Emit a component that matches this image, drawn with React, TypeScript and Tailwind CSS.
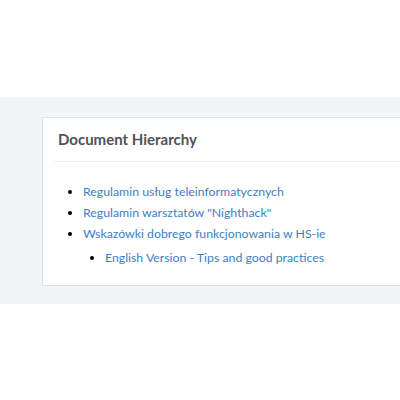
const items = [
  { title: "Regulamin usług teleinformatycznych", children: [] as string[] },
  { title: 'Regulamin warsztatów "Nighthack"', children: [] as string[] },
  {
    title: "Wskazówki dobrego funkcjonowania w HS-ie",
    children: ["English Version - Tips and good practices"],
  },
];

const App = () => {
  return (
    <div className="w-[400px] h-[400px] bg-white font-['Lato','Liberation_Sans',sans-serif] overflow-hidden">
      <div className="h-[97px]" />
      <div className="bg-[#f2f4f6] pt-5 pb-[18px] pl-[42px]">
        <div className="w-[400px] bg-white border border-[#dbe2ea]">
          <div className="h-[44px] flex items-center pl-[4px] border-b border-[#eef1f4] ml-[11px]">
            <h2 className="text-[15px] font-bold text-[#50535c]">Document Hierarchy</h2>
          </div>
          <ul className="pt-[19px] pb-[17px] pl-[40px] list-disc text-[12.3px] leading-[21px] marker:text-black">
            {items.map((item, i) => (
              <li key={i}>
                <a className="text-[#3d7fc4]">{item.title}</a>
                {item.children.length > 0 && (
                  <ul className="list-disc pl-[22px] mt-[3px]">
                    {item.children.map((c, j) => (
                      <li key={j}>
                        <a className="text-[#3d7fc4]">{c}</a>
                      </li>
                    ))}
                  </ul>
                )}
              </li>
            ))}
          </ul>
        </div>
      </div>
    </div>
  );
};

export default App;
